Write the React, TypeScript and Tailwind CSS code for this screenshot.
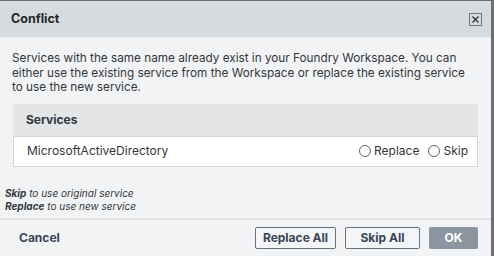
import React from "react";

export default function App() {
  const font = { fontFamily: "Inter, 'Noto Sans', sans-serif" };
  return (
    <div className="w-[494px] h-[256px] bg-[#6b6e72] overflow-hidden" style={font}>
      <div className="w-[491px] h-[256px] mt-px flex flex-col bg-[#f2f3f4] text-[#2f3237]">
        <div className="h-[37px] shrink-0 bg-[#d8dbde] border-b border-[#eef0f1] flex items-center justify-between pl-[11px] pr-[9px]">
          <span className="text-[12.5px] font-bold text-[#23272c] mt-px">Conflict</span>
          <span className="w-[13px] h-[13px] border border-[#6f757c] flex items-center justify-center">
            <svg width="7" height="7" viewBox="0 0 7 7">
              <path d="M0.5 0.5 L6.5 6.5 M6.5 0.5 L0.5 6.5" stroke="#2a2e33" strokeWidth="1.2" />
            </svg>
          </span>
        </div>
        <div className="pl-[12px] pt-[13px] w-[474px] text-[11.75px] leading-[14.5px] text-[#33373c]">
          Services with the same name already exist in your Foundry Workspace. You can either use the existing service from the Workspace or replace the existing service to use the new service.
        </div>
        <div className="mx-[13px] mt-[9px] w-[465px]">
          <div className="h-[32px] bg-[#e3e5e7] flex items-center pl-[13px] text-[12px] font-bold text-[#33373c]">
            Services
          </div>
          <div className="h-[31px] bg-white border border-[#d3d6d9] flex items-center justify-between pl-[13px] pr-[9px] text-[12px] text-[#33373c]">
            <span>MicrosoftActiveDirectory</span>
            <div className="flex items-center gap-[9px]">
              <label className="flex items-center gap-[3px]">
                <span className="w-[12px] h-[12px] rounded-full border border-[#5f656b] bg-white" />
                <span>Replace</span>
              </label>
              <label className="flex items-center gap-[3px]">
                <span className="w-[12px] h-[12px] rounded-full border border-[#5f656b] bg-white" />
                <span>Skip</span>
              </label>
            </div>
          </div>
        </div>
        <div className="pl-[5px] pt-[20px] text-[10px] leading-[13px] italic text-[#33373c]">
          <div><span className="font-bold">Skip</span> to use original service</div>
          <div><span className="font-bold">Replace</span> to use new service</div>
        </div>
        <div className="mt-[5px] border-t-2 border-[#e2e4e6] flex items-center justify-between pl-[19px] pr-[13px] pt-[7px]">
          <span className="text-[12px] font-bold text-[#3a4656]">Cancel</span>
          <div className="flex items-center gap-[9px]">
            <button className="h-[22px] w-[81px] border border-[#69717b] rounded-[2px] bg-[#f4f5f6] text-[12px] font-bold text-[#3a4656]">Replace All</button>
            <button className="h-[22px] w-[75px] border border-[#69717b] rounded-[2px] bg-[#f4f5f6] text-[12px] font-bold text-[#3a4656]">Skip All</button>
            <button className="h-[22px] w-[49px] rounded-[2px] bg-[#8a959f] text-[12px] font-bold text-white">OK</button>
          </div>
        </div>
      </div>
    </div>
  );
}
